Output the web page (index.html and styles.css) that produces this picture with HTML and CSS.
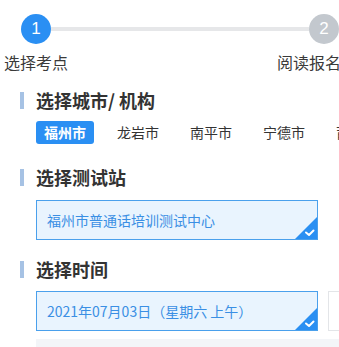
FILE: index.html
```html
<!DOCTYPE html>
<html lang="zh">
<head>
<meta charset="utf-8">
<link rel="stylesheet" href="styles.css">
</head>
<body>
<div class="page">
  <div class="steps">
    <div class="step-track">
      <span class="dot dot-active">1</span>
      <span class="track-line"></span>
      <span class="dot dot-idle">2</span>
    </div>
    <div class="step-labels">
      <span class="step-label">选择考点</span>
      <span class="step-label">阅读报名</span>
    </div>
  </div>

  <section class="section">
    <h2 class="section-title">选择城市/ 机构</h2>
    <div class="tabs">
      <span class="tab tab-active">福州市</span>
      <span class="tab">龙岩市</span>
      <span class="tab">南平市</span>
      <span class="tab">宁德市</span>
      <span class="tab">莆田市</span>
    </div>
  </section>

  <section class="section">
    <h2 class="section-title">选择测试站</h2>
    <div class="options">
      <div class="option option-selected">
        福州市普通话培训测试中心
        <svg class="check" viewBox="0 0 22 22" width="22" height="22"><polygon points="22,0 22,22 0,22" fill="#2a8ff2"/><path d="M11 15.5 L14 18 L18.5 13.5" fill="none" stroke="#fff" stroke-width="2" stroke-linecap="round" stroke-linejoin="round"/></svg>
      </div>
    </div>
  </section>

  <section class="section section-time">
    <h2 class="section-title">选择时间</h2>
    <div class="time-grid">
      <div class="option option-selected">
        2021年07月03日（星期六 上午）
        <svg class="check" viewBox="0 0 22 22" width="22" height="22"><polygon points="22,0 22,22 0,22" fill="#2a8ff2"/><path d="M11 15.5 L14 18 L18.5 13.5" fill="none" stroke="#fff" stroke-width="2" stroke-linecap="round" stroke-linejoin="round"/></svg>
      </div>
      <div class="option option-plain">2021年07月03日（星期六 下午）</div>
    </div>
    <div class="next-row"></div>
  </section>
</div>
</body>
</html>
```

FILE: styles.css
```css
html, body {
  margin: 0;
  padding: 0;
  background: #ffffff;
}
body {
  font-family: "Noto Sans CJK SC", "Noto Sans", sans-serif;
  color: #333333;
  width: 339px;
  height: 347px;
  overflow: hidden;
}
.page {
  width: 339px;
  overflow: hidden;
}
.steps {
  padding-top: 14px;
}
.step-track {
  display: flex;
  align-items: center;
  padding-left: 21px;
  width: 400px;
}
.dot {
  width: 30px;
  height: 30px;
  border-radius: 50%;
  color: #ffffff;
  font-family: "Liberation Sans", Arial, sans-serif;
  font-size: 17px;
  line-height: 30px;
  text-align: center;
  flex: none;
}
.dot-active {
  background: #2a8ff3;
}
.dot-idle {
  background: #c3c8ce;
}
.track-line {
  width: 258px;
  height: 4px;
  background: #e6e7e9;
  flex: none;
}
.step-labels {
  display: flex;
  gap: 209px;
  padding-left: 4px;
  margin-top: 7px;
  width: 420px;
}
.step-label {
  font-size: 16px;
  line-height: 22px;
  color: #3a3a3a;
  white-space: nowrap;
}
.section {
  padding-left: 36px;
}
.section-title {
  position: relative;
  margin: 0;
  font-size: 18px;
  font-weight: bold;
  line-height: 24px;
  color: #333333;
}
.section-title::before {
  content: "";
  position: absolute;
  left: -16px;
  top: 4px;
  width: 4px;
  height: 17px;
  background: #a6c2e4;
}
.section:nth-of-type(1) .section-title {
  margin-top: 15px;
}
.tabs {
  display: flex;
  gap: 15px;
  margin-top: 9px;
  width: 420px;
}
.tab {
  width: 58px;
  height: 23px;
  line-height: 23px;
  text-align: center;
  font-size: 14px;
  color: #333333;
  border-radius: 3px;
  flex: none;
  white-space: nowrap;
}
.tab-active {
  background: #2a8ff3;
  color: #ffffff;
  font-weight: bold;
}
.section:nth-of-type(2) .section-title {
  margin-top: 21px;
}
.options {
  margin-top: 11px;
}
.option {
  position: relative;
  box-sizing: border-box;
  width: 282px;
  height: 40px;
  padding-left: 10px;
  font-size: 14px;
  line-height: 38px;
  white-space: nowrap;
  flex: none;
}
.option-selected {
  border: 1px solid #4aa0ec;
  background: #e9f4fe;
  color: #3a8fe4;
}
.option-plain {
  border: 1px solid #e3e5e8;
  background: #ffffff;
  color: #555555;
}
.check {
  position: absolute;
  right: 0;
  bottom: 0;
}
.section-time .section-title {
  margin-top: 17px;
}
.time-grid {
  display: flex;
  gap: 10px;
  margin-top: 10px;
  width: 600px;
}
.next-row {
  margin-top: 8px;
  height: 10px;
  background: #f3f5f8;
}
```
